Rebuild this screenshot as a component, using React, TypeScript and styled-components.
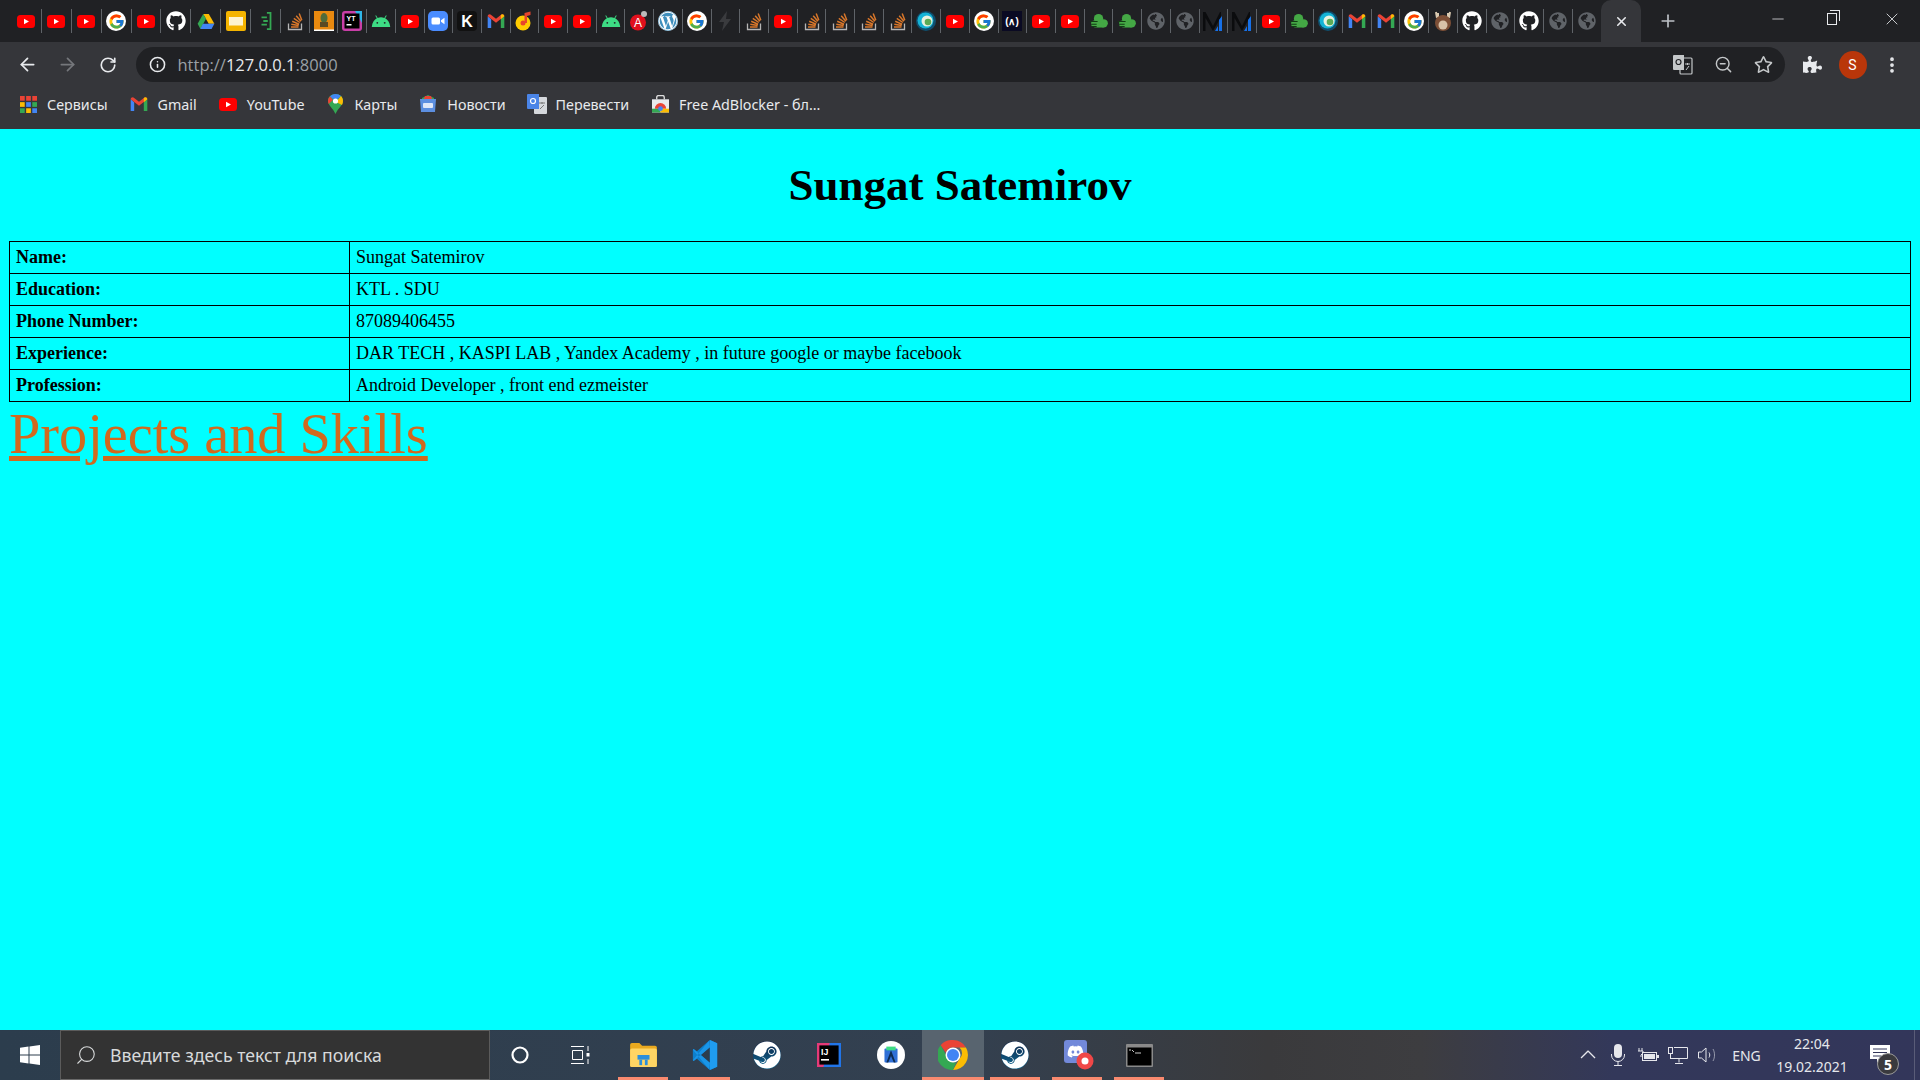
import React from "react";
import styled, { createGlobalStyle } from "styled-components";
import { FaGithub, FaWordpress, FaGlobeAmericas, FaSteam, FaDiscord, FaPuzzlePiece, FaRegStar } from "react-icons/fa";
import { FcGoogle } from "react-icons/fc";
import { VscChevronUp } from "react-icons/vsc";
import { ArrowLeft, ArrowRight, RotateCw, Info, ZoomOut, Plus, X, Minus, Search, EllipsisVertical } from "lucide-react";

const GlobalStyle = createGlobalStyle`
  html, body {
    margin: 0;
    padding: 0;
    height: 100%;
    overflow: hidden;
    background: #00ffff;
  }
  #root {
    height: 100%;
  }
`;

const Screen = styled.div`
  display: flex;
  flex-direction: column;
  width: 1920px;
  height: 1080px;
  font-family: "Noto Sans", "Open Sans", sans-serif;
`;

const TabStrip = styled.div`
  display: flex;
  align-items: flex-start;
  height: 42px;
  padding-left: 12px;
  background: #202124;
  flex-shrink: 0;
`;

const TabCell = styled.div`
  display: flex;
  flex-shrink: 0;
  align-items: center;
  justify-content: center;
  box-sizing: border-box;
  width: 28.71px;
  height: 24px;
  margin-top: 9px;
  border-right: 1px solid #5f6368;
  &:nth-child(-n + 9) {
    width: 29.9px;
  }
  &:nth-child(55) {
    border-right: none;
  }
`;

const ActiveTab = styled.div`
  display: flex;
  align-items: center;
  justify-content: center;
  width: 40px;
  height: 42px;
  background: #35363a;
  border-radius: 10px 10px 0 0;
  color: #e8eaed;
  flex-shrink: 0;
`;

const NewTab = styled.div`
  display: flex;
  align-items: center;
  justify-content: center;
  width: 28px;
  height: 42px;
  margin-left: 13px;
  color: #bdc1c6;
`;

const WindowControls = styled.div`
  display: flex;
  margin-left: auto;
  height: 38px;
  color: #e8eaed;
`;

const WindowButton = styled.div`
  display: flex;
  align-items: center;
  justify-content: center;
  width: 57px;
  height: 38px;
`;

const RestoreIcon = styled.div`
  position: relative;
  box-sizing: border-box;
  width: 10px;
  height: 12px;
  margin-right: 5px;
  border: 1px solid #e8eaed;
  &::after {
    content: "";
    position: absolute;
    top: -4px;
    right: -4px;
    width: 9px;
    height: 10px;
    border-top: 1px solid #e8eaed;
    border-right: 1px solid #e8eaed;
  }
`;

const Toolbar = styled.div`
  display: flex;
  align-items: center;
  height: 40px;
  padding: 5px 0 0 7px;
  box-sizing: border-box;
  background: #35363a;
  color: #e8eaed;
  flex-shrink: 0;
`;

const NavButton = styled.div<{ $dim?: boolean }>`
  display: flex;
  align-items: center;
  justify-content: center;
  width: 40.5px;
  height: 35px;
  color: ${({ $dim }) => ($dim ? "#75777b" : "#e8eaed")};
`;

const Omnibox = styled.div`
  display: flex;
  align-items: center;
  width: 1649px;
  height: 35px;
  margin-left: 7px;
  padding: 0 12px 0 13px;
  box-sizing: border-box;
  border-radius: 18px;
  background: #202124;
`;

const Url = styled.div`
  margin-left: 12px;
  font-family: "Open Sans", sans-serif;
  font-size: 16.5px;
  color: #9aa0a6;
  white-space: nowrap;
`;

const UrlHost = styled.span`
  color: #e8eaed;
`;

const OmniActions = styled.div`
  display: flex;
  align-items: center;
  gap: 21px;
  margin-left: auto;
  color: #c4c7c9;
`;

const ToolActions = styled.div`
  display: flex;
  align-items: center;
  margin-left: 18px;
`;

const Avatar = styled.div`
  display: flex;
  align-items: center;
  justify-content: center;
  width: 28px;
  height: 28px;
  margin: 0 15px 0 17px;
  border-radius: 50%;
  background: #b9360a;
  color: #fff;
  font-family: "Roboto", sans-serif;
  font-size: 14px;
`;

const BookmarkBar = styled.div`
  display: flex;
  align-items: center;
  height: 47px;
  padding: 0 0 3px 18px;
  box-sizing: border-box;
  background: #35363a;
  flex-shrink: 0;
`;

const Bookmark = styled.div`
  display: flex;
  align-items: center;
  gap: 9px;
  margin-right: 21px;
  font-size: 14.3px;
  color: #e8eaed;
  white-space: nowrap;
`;

const BookmarkIcon = styled.span`
  display: flex;
  align-items: center;
  justify-content: center;
  width: 20px;
  height: 20px;
`;

const Page = styled.main`
  flex: 1;
  min-height: 0;
  padding: 0 9px;
  background: #00ffff;
  border-top: 1px solid #00ffff;
  color: #000;
  font-family: "Liberation Serif", "Times New Roman", serif;
`;

const Heading = styled.h1`
  margin: 0;
  padding: 28px 0 28px;
  font-size: 45px;
  line-height: 55px;
  font-weight: bold;
  text-align: center;
`;

const InfoTable = styled.table`
  width: 1902px;
  border-collapse: collapse;
  table-layout: fixed;
  font-size: 18px;
`;

const LabelCell = styled.th`
  width: 340px;
  height: 32px;
  padding: 0 6px;
  box-sizing: border-box;
  border: 1px solid #000;
  text-align: left;
`;

const ValueCell = styled.td`
  height: 32px;
  padding: 0 6px;
  box-sizing: border-box;
  border: 1px solid #000;
`;

const ProjectsLink = styled.a`
  display: inline-block;
  font-size: 56.25px;
  line-height: 65px;
  color: #d2691e;
  text-decoration: underline;
`;

const Taskbar = styled.div`
  display: flex;
  align-items: center;
  height: 50px;
  background: linear-gradient(90deg, #2c3d4d 0%, #334050 50%, #3a3a3c 66%, #3d3d40 74%, #33385a 84%, #33365a 100%);
  color: #fff;
  flex-shrink: 0;
`;

const StartButton = styled.div`
  display: flex;
  align-items: center;
  justify-content: center;
  width: 60px;
  height: 50px;
  flex-shrink: 0;
`;

const SearchBox = styled.div`
  display: flex;
  align-items: center;
  gap: 13px;
  width: 430px;
  height: 50px;
  padding-left: 14px;
  box-sizing: border-box;
  background: #333;
  border: 1px solid #5b5b5b;
  border-bottom-color: #6a6a6a;
  font-size: 17.7px;
  color: #d8dadb;
  flex-shrink: 0;
`;

const ShellButton = styled.div`
  display: flex;
  align-items: center;
  justify-content: center;
  width: 60px;
  height: 50px;
  flex-shrink: 0;
`;

const TaskGroup = styled.div`
  display: flex;
  margin-left: 2px;
`;

const TaskButton = styled.div<{ $open?: boolean; $active?: boolean }>`
  position: relative;
  display: flex;
  align-items: center;
  justify-content: center;
  width: 62px;
  height: 50px;
  flex-shrink: 0;
  background: ${({ $active }) => ($active ? "#58646f" : "transparent")};
  &::after {
    content: "";
    display: ${({ $open }) => ($open ? "block" : "none")};
    position: absolute;
    left: ${({ $active }) => ($active ? "0" : "6px")};
    right: ${({ $active }) => ($active ? "0" : "6px")};
    bottom: 0;
    height: 3px;
    background: #f98a6f;
  }
`;

const Tray = styled.div`
  display: flex;
  align-items: center;
  margin-left: auto;
  height: 50px;
  color: #e6e7ec;
`;

const TrayItem = styled.div`
  display: flex;
  align-items: center;
  justify-content: center;
  width: 30px;
  height: 50px;
`;

const Language = styled.div`
  width: 47px;
  text-align: center;
  font-size: 14px;
`;

const Clock = styled.div`
  display: flex;
  flex-direction: column;
  align-items: center;
  gap: 6px;
  width: 78px;
  margin-left: 3px;
  font-size: 14px;
  line-height: 17px;
`;

const Notifications = styled.div`
  position: relative;
  display: flex;
  align-items: center;
  justify-content: center;
  box-sizing: border-box;
  width: 48px;
  height: 50px;
  margin: 0 5px 0 16px;
  padding-right: 22px;
  border-right: 1px solid #5a5c78;
`;

const NotificationBadge = styled.span`
  position: absolute;
  top: 23px;
  right: 15px;
  display: flex;
  align-items: center;
  justify-content: center;
  box-sizing: border-box;
  width: 22px;
  height: 22px;
  border: 1px solid #9a9a9a;
  border-radius: 50%;
  background: #3a3a3e;
  font-size: 14px;
  font-weight: 700;
  color: #fff;
`;

const GoogleCircle = styled.span`
  display: flex;
  align-items: center;
  justify-content: center;
  width: 20px;
  height: 20px;
  border-radius: 50%;
  background: #fff;
`;

const SteamCircle = styled.span`
  display: flex;
  border-radius: 50%;
  background: linear-gradient(#0f2347, #0f6a94);
`;

const WordpressCircle = styled.span`
  display: flex;
  border-radius: 50%;
  background: #fff;
`;

const MirroredSearch = styled(Search)`
  transform: scaleX(-1);
`;

type TabKind =
  | "yt" | "google" | "github" | "drive" | "slides" | "bracket" | "so" | "photo" | "youtrack"
  | "android" | "zoom" | "k" | "gmail" | "music" | "angular" | "wp" | "bolt" | "webex"
  | "fcc" | "cloud" | "globe" | "m" | "deer";

function Youtube() {
  return (
    <svg width="18" height="13" viewBox="0 0 18 13">
      <rect width="18" height="13" rx="3.500" fill="#f00" />
      <path d="M7 3.700l5 2.800-5 2.800z" fill="#fff" />
    </svg>
  );
}

function Gmail() {
  return (
    <svg width="18" height="14" viewBox="0 0 19 16">
      <path d="M0 2.500V16h4V6z" fill="#4285f4" />
      <path d="M15 6v10h4V2.500z" fill="#34a853" />
      <path d="M0 2.500C0 .5 2.500-.5 4 1l5.500 4.500L15 1c1.500-1.500 4-.5 4 1.500L9.500 10z" fill="#ea4335" />
      <path d="M15 1c1.500-1.500 4-.5 4 1.500L15 6z" fill="#fbbc04" />
    </svg>
  );
}

function StackOverflow() {
  return (
    <svg width="20" height="20" viewBox="0 0 20 20" fill="none">
      <path d="M3.500 12.500V18.500H16.500V12.500" stroke="#b5b5b5" strokeWidth="1.300" />
      <path d="M6 16h7.500M6.300 13.200l7.400 1.300M7.200 10.300l6.900 2.900M8.800 7.400l6 4.100M11.200 4.800l4.700 5.400M14.200 2.600l2.600 6.700" stroke="#d9772a" strokeWidth="1.500" />
    </svg>
  );
}

function TabIcon({ kind }: { kind: TabKind }) {
  switch (kind) {
    case "yt":
      return <Youtube />;
    case "google":
      return (
        <GoogleCircle>
          <FcGoogle size={17} />
        </GoogleCircle>
      );
    case "github":
      return <FaGithub size={20} color="#fff" />;
    case "drive":
      return (
        <svg width="18" height="15" viewBox="0 0 19 17">
          <path d="M6.300 0h6.400l6.300 11h-6.400z" fill="#fbbc04" />
          <path d="M6.300 0l3.200 5.500L3.200 17 0 11z" fill="#34a853" />
          <path d="M6 11h13l-3.200 6H3z" fill="#4285f4" />
        </svg>
      );
    case "slides":
      return (
        <svg width="20" height="20" viewBox="0 0 20 20">
          <rect width="20" height="20" rx="2" fill="#f4b400" />
          <rect x="3" y="6" width="14" height="8.500" fill="#fdf3d0" />
        </svg>
      );
    case "bracket":
      return (
        <svg width="14" height="18" viewBox="0 0 14 20" fill="none" stroke="#34a853" strokeWidth="2">
          <path d="M8 1h4v18H8M2 6h6M4 10h5M2 14h6" />
        </svg>
      );
    case "so":
      return <StackOverflow />;
    case "photo":
      return (
        <svg width="20" height="20" viewBox="0 0 20 20">
          <rect width="20" height="20" fill="#e8890f" />
          <ellipse cx="10" cy="7" rx="3.500" ry="5" fill="#4f6b3a" />
          <rect x="6" y="11" width="8" height="5" fill="#5c4a22" />
          <rect y="18.500" width="20" height="1.500" fill="#fff" />
        </svg>
      );
    case "youtrack":
      return (
        <svg width="20" height="20" viewBox="0 0 20 20">
          <rect width="20" height="20" rx="3" fill="#c93fa7" />
          <path d="M13 0h7v12z" fill="#2fb6e8" />
          <rect x="2.500" y="2.500" width="15" height="15" fill="#000" />
          <text x="4.500" y="10" fontSize="7" fontFamily="Liberation Sans" fontWeight="700" fill="#fff">YT</text>
          <rect x="4.500" y="13" width="5" height="1.500" fill="#fff" />
        </svg>
      );
    case "android":
      return (
        <svg width="20" height="12" viewBox="0 0 20 13">
          <path d="M0 13C.4 8 3 5 5.500 3.600L3.800.8l.8-.5L6.400 3.200C8.700 2.200 11.300 2.200 13.600 3.200L15.400.3l.8.5-1.700 2.800C17 5 19.600 8 20 13z" fill="#3ddc84" />
          <circle cx="6" cy="8.500" r="1" fill="#202124" />
          <circle cx="14" cy="8.500" r="1" fill="#202124" />
        </svg>
      );
    case "zoom":
      return (
        <svg width="20" height="20" viewBox="0 0 20 20">
          <rect width="20" height="20" rx="5" fill="#4a8cff" />
          <rect x="3.500" y="6.500" width="8.500" height="7" rx="1.500" fill="#fff" />
          <path d="M13 9.200l3.500-2.500v6.600L13 10.800z" fill="#fff" />
        </svg>
      );
    case "k":
      return (
        <svg width="20" height="20" viewBox="0 0 20 20">
          <rect width="20" height="20" rx="4" fill="#111" />
          <text x="10" y="16" textAnchor="middle" fontSize="16" fontFamily="Liberation Sans" fontWeight="700" fill="#fff">K</text>
        </svg>
      );
    case "gmail":
      return <Gmail />;
    case "music":
      return (
        <svg width="19" height="20" viewBox="0 0 19 20">
          <circle cx="8" cy="12" r="7.500" fill="#ffcc00" />
          <circle cx="8" cy="12" r="2.500" fill="#e8442c" />
          <path d="M9.500 12V2l6-1.500v3.500l-3.500 1V12z" fill="#e8442c" />
        </svg>
      );
    case "angular":
      return (
        <svg width="20" height="20" viewBox="0 0 20 20">
          <circle cx="9" cy="11.500" r="8" fill="#e0101c" />
          <text x="9" y="16" textAnchor="middle" fontSize="12" fontFamily="Liberation Sans" fill="#fff">A</text>
          <circle cx="15" cy="3" r="3" fill="#bbb" />
        </svg>
      );
    case "wp":
      return (
        <WordpressCircle>
          <FaWordpress size={20} color="#3f8fbd" />
        </WordpressCircle>
      );
    case "bolt":
      return (
        <svg width="14" height="20" viewBox="0 0 14 20">
          <path d="M9 0L1 11h5l-2 9 9-12H8z" fill="#3a3b3e" />
        </svg>
      );
    case "webex":
      return (
        <svg width="20" height="20" viewBox="0 0 20 20">
          <circle cx="10" cy="10" r="10" fill="#0f4f6e" />
          <circle cx="9.500" cy="9.500" r="8" fill="#14b3d6" />
          <circle cx="11" cy="10" r="5.500" fill="#e8f2e0" />
          <circle cx="12" cy="11" r="3.300" fill="#5bab55" />
        </svg>
      );
    case "fcc":
      return (
        <svg width="20" height="20" viewBox="0 0 20 20">
          <rect width="20" height="20" fill="#0a0a23" />
          <text x="10" y="14" textAnchor="middle" fontSize="10" fontFamily="Liberation Sans" fontWeight="700" fill="#fff">(∧)</text>
        </svg>
      );
    case "cloud":
      return (
        <svg width="18" height="14" viewBox="0 0 19 15">
          <circle cx="9" cy="5" r="5" fill="#44a845" />
          <circle cx="14.500" cy="10" r="4.500" fill="#44a845" />
          <circle cx="4.500" cy="10.500" r="3.500" fill="#44a845" />
          <rect x="4.500" y="9" width="10" height="5.500" fill="#44a845" />
          <path d="M0 8h8M1 11h6M2 13.500h5" stroke="#123d14" strokeWidth="1.200" />
        </svg>
      );
    case "globe":
      return <FaGlobeAmericas size={18} color="#5f6368" />;
    case "m":
      return (
        <svg width="20" height="20" viewBox="0 0 20 20">
          <path d="M0 20V1h2.500L10 15V20L2.500 7V20z" fill="#0b0c0e" />
          <path d="M10 15L17 1h1v5L10 20z" fill="#0b0c0e" />
          <path d="M12 20l3-5v5zM16 20V9l3-4v15z" fill="#1670e8" />
        </svg>
      );
    case "deer":
      return (
        <svg width="20" height="20" viewBox="0 0 20 20">
          <path d="M3 1l1 6M5 2l0 5M17 1l-1 6M15 2l0 5" stroke="#d9c9b0" strokeWidth="2" />
          <circle cx="10" cy="12" r="8" fill="#7d4f36" />
          <circle cx="10" cy="14" r="4.500" fill="#d8c2a8" />
        </svg>
      );
  }
}

const tabs: TabKind[] = [
  "yt", "yt", "yt", "google", "yt", "github", "drive", "slides", "bracket", "so", "photo", "youtrack",
  "android", "yt", "zoom", "k", "gmail", "music", "yt", "yt", "android", "angular", "wp", "google",
  "bolt", "so", "yt", "so", "so", "so", "so", "webex", "yt", "google", "fcc", "yt", "yt", "cloud",
  "cloud", "globe", "globe", "m", "m", "yt", "cloud", "webex", "gmail", "gmail", "google", "deer",
  "github", "globe", "github", "globe", "globe",
];

function AppsGrid() {
  const colors = ["#ea4335", "#ea4335", "#ea4335", "#fbbc04", "#4285f4", "#34a853", "#34a853", "#fbbc04", "#4285f4"];
  return (
    <svg width="17" height="17" viewBox="0 0 18 18">
      {colors.map((c, i) => (
        <rect key={i} x={(i % 3) * 6.500} y={Math.floor(i / 3) * 6.500} width="5" height="5" fill={c} />
      ))}
    </svg>
  );
}

function MapsPin() {
  return (
    <svg width="15" height="20" viewBox="0 0 15 20">
      <path d="M7.500 0C3 0 0 3.200 0 7c0 4.500 5 7 7.500 13C10 14 15 11.500 15 7c0-3.800-3-7-7.500-7z" fill="#34a853" />
      <path d="M2 2.500L7.500 7 13 2C11.500.7 9.700 0 7.500 0 5.200 0 3.300 1 2 2.500z" fill="#4285f4" />
      <path d="M13 2L8 8l6 3c.7-1.200 1-2.500 1-4 0-2-.8-3.700-2-5z" fill="#fbbc04" />
      <path d="M2 2.500C.7 3.800 0 5.300 0 7c0 1 .3 2 .7 3L5 6z" fill="#ea4335" />
      <circle cx="7.500" cy="7" r="2.600" fill="#fff" />
    </svg>
  );
}

function NewsIcon() {
  return (
    <svg width="18" height="18" viewBox="0 0 18 18">
      <path d="M3 3l6-3 6 3v4H3z" fill="#34a853" />
      <path d="M6 1h6l2 5H4z" fill="#ea4335" />
      <path d="M1 4h16l-1 13H2z" fill="#5c8fe0" />
      <rect x="4" y="8" width="10" height="5" rx="1" fill="#dfe8f8" />
    </svg>
  );
}

function TranslateIcon() {
  return (
    <svg width="20" height="20" viewBox="0 0 20 20">
      <rect x="7" y="3" width="13" height="17" rx="1" fill="#d5d8dc" />
      <path d="M1 0h11v15H1a1 1 0 0 1-1-1V1a1 1 0 0 1 1-1z" fill="#4a85e8" />
      <circle cx="6" cy="7" r="2.500" fill="none" stroke="#fff" strokeWidth="1.200" />
      <path d="M12 9h6M15 8v2M13 15l4-4" stroke="#777" strokeWidth="1" />
    </svg>
  );
}

function StoreIcon() {
  return (
    <svg width="17" height="18" viewBox="0 0 18 18">
      <path d="M5 4V2a2 2 0 0 1 2-2h4a2 2 0 0 1 2 2v2" fill="none" stroke="#ddd" strokeWidth="1.400" />
      <rect y="4" width="18" height="14" fill="#e8eaed" />
      <path d="M3 14a6 6 0 0 1 12 0z" fill="#ea4335" />
      <rect y="14" width="9" height="4" fill="#34a853" />
      <rect x="9" y="14" width="9" height="4" fill="#fbbc04" />
      <circle cx="9" cy="14" r="2.500" fill="#4285f4" />
    </svg>
  );
}

function WindowsLogo() {
  return (
    <svg width="20" height="20" viewBox="0 0 20 20" fill="#fff">
      <path d="M0 2.800L8.500 1.500V9.500H0zM9.500 1.400L20 0V9.500H9.500zM0 10.500H8.500V18.500L0 17.200zM9.500 10.500H20V20L9.500 18.600z" />
    </svg>
  );
}

function TaskViewIcon() {
  return (
    <svg width="20" height="20" viewBox="0 0 20 20" fill="none" stroke="#fff" strokeWidth="1">
      <path d="M1 1.500h13M1 18.500h13M2.500 5.500h10v9h-10zM18 1v5M18 14v5" />
      <rect x="16.500" y="8" width="3" height="3.500" fill="#fff" stroke="none" />
    </svg>
  );
}

function FilesIcon() {
  return (
    <svg width="29" height="24" viewBox="0 0 29 26">
      <path d="M0 2a2 2 0 0 1 2-2h8l3 3h14a2 2 0 0 1 2 2v19a2 2 0 0 1-2 2H2a2 2 0 0 1-2-2z" fill="#e9a91f" />
      <rect y="6" width="29" height="20" rx="2" fill="#ffd564" />
      <rect x="8" y="13" width="13" height="5" fill="#2b8fdc" />
      <rect x="10" y="18" width="3" height="6" fill="#2b8fdc" />
      <rect x="16" y="18" width="3" height="6" fill="#2b8fdc" />
    </svg>
  );
}

function VsCodeIcon() {
  return (
    <svg width="30" height="30" viewBox="0 0 30 37">
      <path d="M21 0l9 4v29l-9 4L5 23l-4 3-1-1V12l1-1 4 3z" fill="#0d7fcc" />
      <path d="M21 9L10 18.500 21 28z" fill="#2c3d4d" />
      <path d="M0 12l1-1 20 17-1 8zM0 25l1 1 20-17-1-8z" fill="#1f9cf0" opacity=".75" />
      <path d="M21 0l9 4v29l-9 4z" fill="#1f9cf0" />
    </svg>
  );
}

function IntelliJIcon() {
  return (
    <svg width="24" height="24" viewBox="0 0 30 30">
      <rect width="30" height="30" fill="#e63a78" />
      <path d="M16 0h14v30H8z" fill="#2175e8" />
      <rect x="3" y="3" width="24" height="24" fill="#000" />
      <text x="5" y="15" fontSize="11" fontFamily="Liberation Sans" fontWeight="700" fill="#fff">IJ</text>
      <rect x="5" y="20" width="10" height="2" fill="#fff" />
    </svg>
  );
}

function StudioIcon() {
  return (
    <svg width="28" height="28" viewBox="0 0 30 30">
      <circle cx="15" cy="15" r="15" fill="#fff" />
      <rect x="8" y="8" width="14" height="15" rx="1" fill="#2f6fd6" />
      <path d="M10 6h10v4H10z" fill="#3ddc84" />
      <path d="M15 10l-5 13h2l3-7 3 7h2z" fill="#0c2b52" />
    </svg>
  );
}

function ChromeIcon() {
  return (
    <svg width="30" height="30" viewBox="4 4 40 40">
      <path d="M24 4a20 20 0 0 1 17.300 10H24a10 10 0 0 0-9.500 7L7.500 11A20 20 0 0 1 24 4z" fill="#ea4335" />
      <path d="M41.300 14A20 20 0 0 1 24 44l8.700-15a10 10 0 0 0 0-15z" fill="#fbbc04" />
      <path d="M24 44A20 20 0 0 1 7.500 11l8.700 16a10 10 0 0 0 12 6.500z" fill="#34a853" />
      <circle cx="24" cy="24" r="10" fill="#fff" />
      <circle cx="24" cy="24" r="8" fill="#4285f4" />
    </svg>
  );
}

function SteamBadge() {
  return (
    <SteamCircle>
      <FaSteam size={28} color="#fff" />
    </SteamCircle>
  );
}

function DiscordBadge() {
  return (
    <svg width="34" height="30" viewBox="-4 0 34 30">
      <rect width="23" height="23" rx="3" fill="#7289da" />
      <foreignObject x="3" y="3" width="17" height="17">
        <FaDiscord size={17} color="#fff" />
      </foreignObject>
      <circle cx="21" cy="21" r="8.500" fill="#f04747" />
      <circle cx="21" cy="21" r="3.500" fill="#fff" />
    </svg>
  );
}

function TerminalIcon() {
  return (
    <svg width="27" height="23" viewBox="0 0 27 23">
      <rect width="27" height="23" rx="1" fill="#8a8a8a" />
      <rect x="1.500" y="3.500" width="24" height="18" fill="#000" />
      <path d="M3 6h2M6 6l2 2M9 9h6" stroke="#ccc" strokeWidth="1" />
    </svg>
  );
}

function NotificationBubble() {
  return (
    <svg width="20" height="20" viewBox="0 0 20 20">
      <path d="M0 0h20v14H11l-4 4v-4H0z" fill="#fff" />
      <path d="M3 4h14M3 7.500h14M3 11h8" stroke="#33365a" strokeWidth="1" />
    </svg>
  );
}

function MicIcon() {
  return (
    <svg width="14" height="22" viewBox="0 0 14 22" fill="none" stroke="#e6e7ec" strokeWidth="1">
      <rect x="3" y="0" width="8" height="14" rx="4" fill="#e6e7ec" stroke="none" />
      <path d="M.5 10v1a6.500 6.500 0 0 0 13 0v-1M7 17.500V21M3 21.500h8" />
    </svg>
  );
}

function BatteryIcon() {
  return (
    <svg width="21" height="14" viewBox="0 0 21 14" fill="none" stroke="#e6e7ec" strokeWidth="1">
      <path d="M1 0v3M4 0v3M0 3h5v2L3 7v2" />
      <rect x="4.500" y="4.500" width="14" height="8" />
      <rect x="6" y="6" width="11" height="5" fill="#e6e7ec" stroke="none" />
      <rect x="19" y="7" width="2" height="3" fill="#e6e7ec" stroke="none" />
    </svg>
  );
}

function NetworkIcon() {
  return (
    <svg width="20" height="17" viewBox="0 0 20 17" fill="none" stroke="#e6e7ec" strokeWidth="1">
      <path d="M6 .5h13.500v11H2M11 11.500v4M7 16.500h8" />
      <rect x="0.500" y="0.500" width="4" height="6" fill="#33365a" />
      <path d="M2.500 6.500v5" />
    </svg>
  );
}

function SpeakerIcon() {
  return (
    <svg width="20" height="18" viewBox="0 0 20 18" fill="none" stroke="#e6e7ec" strokeWidth="1">
      <path d="M.5 6h3L8 2v14l-4.500-4h-3z" />
      <path d="M11 6.500c1 1.500 1 3.500 0 5" />
      <path d="M15 3c2 3.500 2 8.500 0 12" opacity=".55" />
    </svg>
  );
}

const bookmarks: { icon: React.ReactNode; label: string }[] = [
  { icon: <AppsGrid />, label: "Сервисы" },
  { icon: <Gmail />, label: "Gmail" },
  { icon: <Youtube />, label: "YouTube" },
  { icon: <MapsPin />, label: "Карты" },
  { icon: <NewsIcon />, label: "Новости" },
  { icon: <TranslateIcon />, label: "Перевести" },
  { icon: <StoreIcon />, label: "Free AdBlocker - бл..." },
];

const rows = [
  ["Name:", "Sungat Satemirov"],
  ["Education:", "KTL . SDU"],
  ["Phone Number:", "87089406455"],
  ["Experience:", "DAR TECH , KASPI LAB , Yandex Academy , in future google or maybe facebook"],
  ["Profession:", "Android Developer , front end ezmeister"],
];

export default function App() {
  return (
    <Screen>
      <GlobalStyle />
      <TabStrip>
        {tabs.map((kind, i) => (
          <TabCell key={i}>
            <TabIcon kind={kind} />
          </TabCell>
        ))}
        <ActiveTab>
          <X size={15} strokeWidth={2.5} />
        </ActiveTab>
        <NewTab>
          <Plus size={20} strokeWidth={2} />
        </NewTab>
        <WindowControls>
          <WindowButton>
            <Minus size={18} strokeWidth={1} />
          </WindowButton>
          <WindowButton>
            <RestoreIcon />
          </WindowButton>
          <WindowButton>
            <X size={20} strokeWidth={1} />
          </WindowButton>
        </WindowControls>
      </TabStrip>
      <Toolbar>
        <NavButton>
          <ArrowLeft size={21} />
        </NavButton>
        <NavButton $dim>
          <ArrowRight size={21} />
        </NavButton>
        <NavButton>
          <RotateCw size={18} strokeWidth={2.2} />
        </NavButton>
        <Omnibox>
          <Info size={17} strokeWidth={2.2} color="#e8eaed" />
          <Url>
            http://<UrlHost>127.0.0.1</UrlHost>:8000
          </Url>
          <OmniActions>
            <svg width="20" height="20" viewBox="0 0 20 20">
              <rect x="7" y="3" width="12" height="16" rx="1" fill="none" stroke="#c4c7c9" strokeWidth="1.200" />
              <path d="M1 0h10v15H1a1 1 0 0 1-1-1V1a1 1 0 0 1 1-1z" fill="#c4c7c9" />
              <circle cx="5.500" cy="7" r="2.500" fill="none" stroke="#202124" strokeWidth="1.200" />
              <path d="M12 9h5M14.500 8v2M13 15l3-4" stroke="#c4c7c9" strokeWidth="1" />
            </svg>
            <ZoomOut size={19} strokeWidth={1.8} />
            <FaRegStar size={19} />
          </OmniActions>
        </Omnibox>
        <ToolActions>
          <FaPuzzlePiece size={19} />
          <Avatar>S</Avatar>
          <EllipsisVertical size={20} strokeWidth={2.5} />
        </ToolActions>
      </Toolbar>
      <BookmarkBar>
        {bookmarks.map((b) => (
          <Bookmark key={b.label}>
            <BookmarkIcon>{b.icon}</BookmarkIcon>
            {b.label}
          </Bookmark>
        ))}
      </BookmarkBar>
      <Page>
        <Heading>Sungat Satemirov</Heading>
        <InfoTable>
          <tbody>
            {rows.map(([label, value]) => (
              <tr key={label}>
                <LabelCell>{label}</LabelCell>
                <ValueCell>{value}</ValueCell>
              </tr>
            ))}
          </tbody>
        </InfoTable>
        <ProjectsLink href="#">Projects and Skills</ProjectsLink>
      </Page>
      <Taskbar>
        <StartButton>
          <WindowsLogo />
        </StartButton>
        <SearchBox>
          <MirroredSearch size={22} strokeWidth={1.2} />
          Введите здесь текст для поиска
        </SearchBox>
        <ShellButton>
          <svg width="18" height="18" viewBox="0 0 18 18" fill="none" stroke="#fff" strokeWidth="2.200">
            <circle cx="9" cy="9" r="7.500" />
          </svg>
        </ShellButton>
        <ShellButton>
          <TaskViewIcon />
        </ShellButton>
        <TaskGroup>
          <TaskButton $open>
            <FilesIcon />
          </TaskButton>
          <TaskButton $open>
            <VsCodeIcon />
          </TaskButton>
          <TaskButton>
            <SteamBadge />
          </TaskButton>
          <TaskButton>
            <IntelliJIcon />
          </TaskButton>
          <TaskButton>
            <StudioIcon />
          </TaskButton>
          <TaskButton $open $active>
            <ChromeIcon />
          </TaskButton>
          <TaskButton $open>
            <SteamBadge />
          </TaskButton>
          <TaskButton $open>
            <DiscordBadge />
          </TaskButton>
          <TaskButton $open>
            <TerminalIcon />
          </TaskButton>
        </TaskGroup>
        <Tray>
          <TrayItem>
            <VscChevronUp size={24} />
          </TrayItem>
          <TrayItem>
            <MicIcon />
          </TrayItem>
          <TrayItem>
            <BatteryIcon />
          </TrayItem>
          <TrayItem>
            <NetworkIcon />
          </TrayItem>
          <TrayItem>
            <SpeakerIcon />
          </TrayItem>
          <Language>ENG</Language>
          <Clock>
            <span>22:04</span>
            <span>19.02.2021</span>
          </Clock>
          <Notifications>
            <NotificationBubble />
            <NotificationBadge>5</NotificationBadge>
          </Notifications>
        </Tray>
      </Taskbar>
    </Screen>
  );
}
